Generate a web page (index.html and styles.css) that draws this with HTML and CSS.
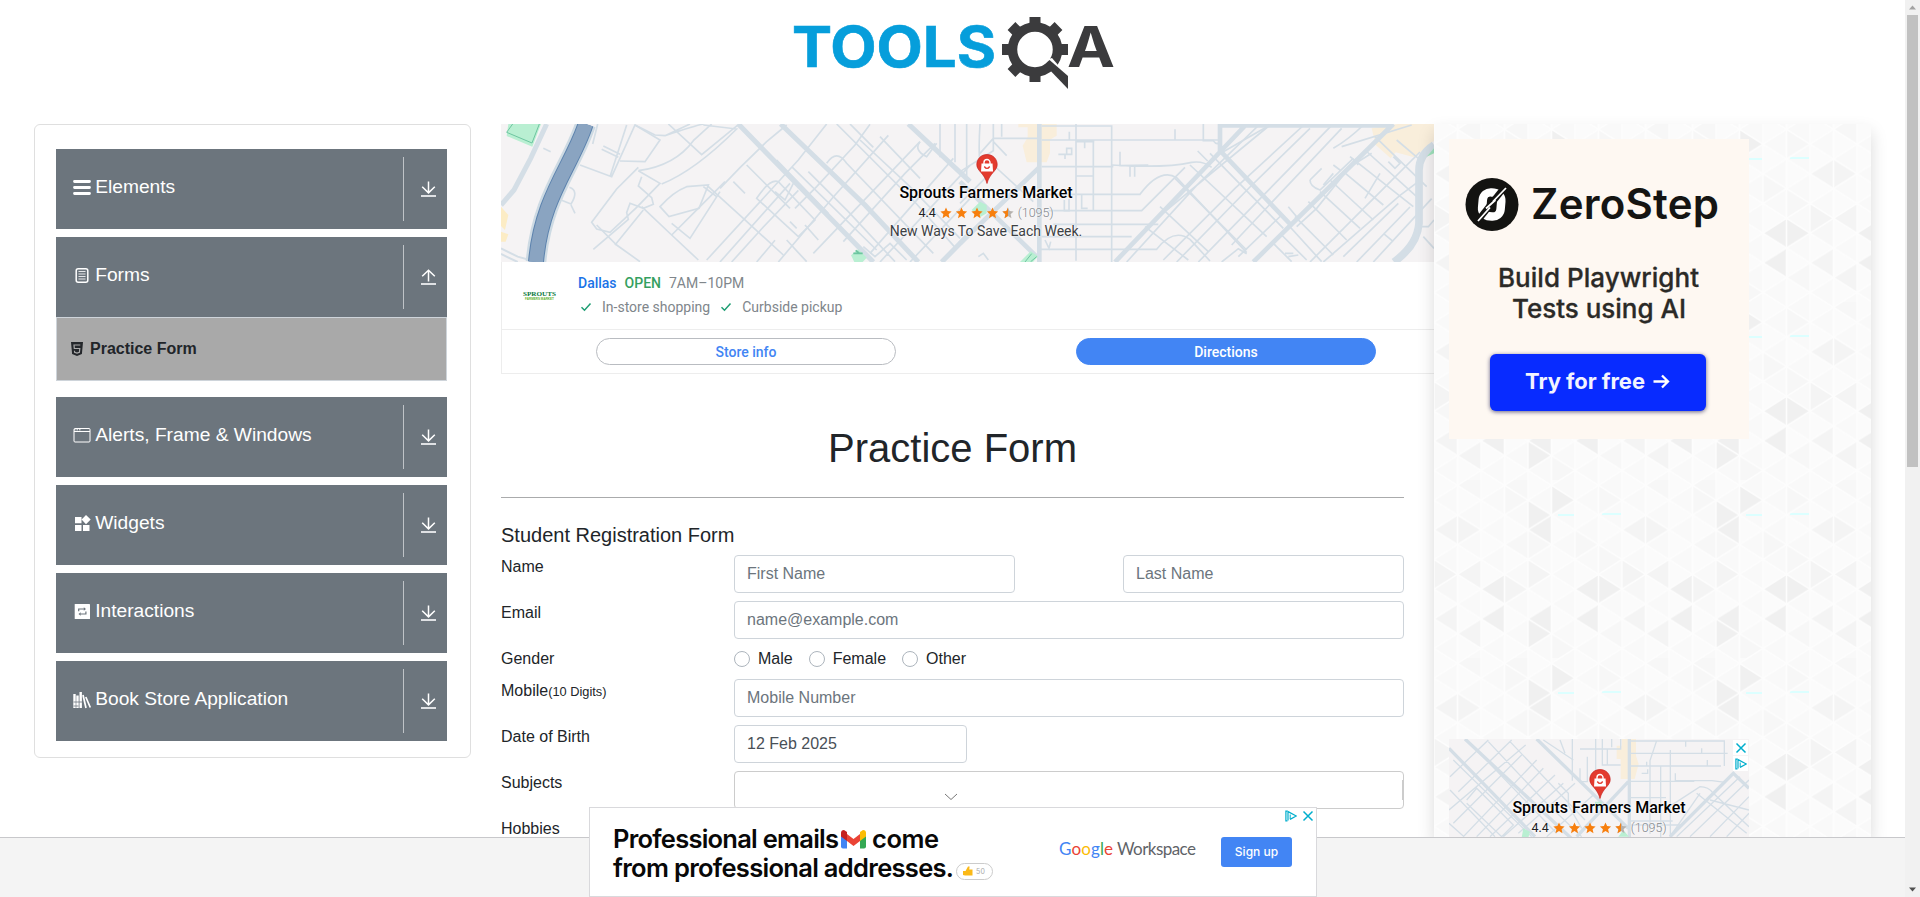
FILE: index.html
```html
<!DOCTYPE html>
<html lang="en">
<head>
<meta charset="utf-8">
<title>ToolsQA</title>
<link rel="stylesheet" href="styles.css">
</head>
<body>
<svg class="defs" width="0" height="0" aria-hidden="true">
  <defs>
    <symbol id="down" viewBox="0 0 16 16"><path d="M8 .5v11M1.7 5.8 8 11.9l6.300-6.100" fill="none" stroke="#fff" stroke-width="1.500"/><path d="M.5 15h15" stroke="#dfe1e4" stroke-width="2"/></symbol>
    <symbol id="up" viewBox="0 0 16 16"><path d="M8 12.500v-11M1.700 7.300 8 1.200l6.300 6.100" fill="none" stroke="#fff" stroke-width="1.500"/><path d="M.5 15h15" stroke="#dfe1e4" stroke-width="2"/></symbol>
    <symbol id="star" viewBox="0 0 12 12"><path d="M6 .4l1.600 3.700 4 .4-3 2.700.9 4L6 9.100l-3.500 2.100.9-4-3-2.700 4-.4z"/></symbol>
    <symbol id="pin" viewBox="0 0 22 30"><path d="M11 .5C5 .5.800 5 .8 10.700.8 17 8.500 19 11 29.500 13.500 19 21.200 17 21.200 10.700 21.200 5 17 .5 11 .5z" fill="#e33b2e" stroke="#c5221f" stroke-width=".7"/><path d="M5.500 9.500h11l.5 8H5z" fill="#fff"/><path d="M8 10V8.500a3 3 0 0 1 6 0V10" fill="none" stroke="#fff" stroke-width="1.400"/><path d="M8.300 12.500q2.700 3.800 5.400 0" fill="none" stroke="#e33b2e" stroke-width="1.300"/></symbol>
    <symbol id="stars" viewBox="0 0 76 12"><g fill="#f77f0e"><use href="#star" width="12" height="12"/><use href="#star" x="15.500" width="12" height="12"/><use href="#star" x="31" width="12" height="12"/><use href="#star" x="46.500" width="12" height="12"/></g><use href="#star" x="62" width="12" height="12" fill="#b5b1ad"/><path d="M68 .4 66.400 4.100l-4 .4 3 2.700-.9 4L68 9.100z" fill="#f77f0e"/></symbol>
    <symbol id="adchoice" viewBox="0 0 12 12"><path d="M2.500 10.800H.9V1.200h1.600" fill="none" stroke="#00aecd" stroke-width="1.200"/><path d="M3 10.600V1.600L11.300 6 5 9.400" fill="none" stroke="#00aecd" stroke-width="1.200"/><path d="M5.200 4.500v4.700" stroke="#00aecd"/></symbol>
    <symbol id="close" viewBox="0 0 12 12"><path d="M1.500 1.500l9 9M10.500 1.500l-9 9" stroke="#00aecd" stroke-width="1.500"/></symbol>
  </defs>
</svg>

<div class="window">
  <div class="page">
    <header class="header">
      <svg class="logo" viewBox="0 0 350 110" role="img" aria-label="ToolsQA">
        <text class="logo-tools" x="12" y="67" textLength="204" lengthAdjust="spacingAndGlyphs">TOOLS</text>
        <g fill="none" stroke="#3b3b3d">
          <circle cx="255" cy="49.500" r="22.500" stroke-width="9.500"/>
          <path d="M255 17v8M255 74v8M222 49.500h8M280 49.500h8M231.500 26l6 6M278.500 26l-6 6M231.500 73l6-6" stroke-width="11"/>
        </g>
        <path d="M262 61l10-3 12 14v9z" fill="#fff"/>
        <path d="M264.500 64.500l5-4.500 18.500 16v13z" fill="#3b3b3d"/>
        <text class="logo-a" x="287" y="67" textLength="48" lengthAdjust="spacingAndGlyphs">A</text>
      </svg>
    </header>

    <div class="columns">
      <nav class="sidebar">
        <div class="group">
          <svg class="icon" viewBox="0 0 18 18"><path d="M1.500 2.500h15M1.500 8.500h15M1.500 14.500h15" stroke="#fff" stroke-width="2.800" stroke-linecap="round"/></svg>
          <span class="label">Elements</span><svg class="toggle"><use href="#down"/></svg>
        </div>
        <div class="group open">
          <svg class="icon" viewBox="0 0 18 18"><rect x="3.200" y="1.700" width="11.600" height="13.600" rx="2" fill="none" stroke="#fff" stroke-width="1.500"/><path d="M5.500 4.500h7M5.500 7h7M5.500 9.500h7M5.500 12h7" stroke="#e4e6e8" stroke-width="1.200"/></svg>
          <span class="label">Forms</span><svg class="toggle"><use href="#up"/></svg>
        </div>
        <div class="subitem">
          <svg class="html5" viewBox="0 0 12 14"><path d="M0 0h12l-1.100 12L6 14l-4.900-2z" fill="#24272b"/><path d="M9.300 3H3l.3 3.500h5.500l-.4 3.800L6 11l-2.400-.7-.1-1.500" fill="none" stroke="#aaa" stroke-width="1.200"/></svg>
          <span>Practice Form</span>
        </div>
        <div class="group">
          <svg class="icon" viewBox="0 0 18 18"><rect x="1" y="1.500" width="16" height="13.500" rx="1" fill="none" stroke="#fff"/><path d="M1 4.500h16" stroke="#fff"/><path d="M1 2.800h7" stroke="#fff" stroke-dasharray="1.500 1"/></svg>
          <span class="label">Alerts, Frame &amp; Windows</span><svg class="toggle"><use href="#down"/></svg>
        </div>
        <div class="group">
          <svg class="icon" viewBox="0 0 18 18"><path d="M2 2h6.500v6.200H2zM2 10h6.500v6H2zM10 10h6.500v6H10zM13 0l4.700 4.600L13 9.200 8.600 4.600z" fill="#fff"/></svg>
          <span class="label">Widgets</span><svg class="toggle"><use href="#down"/></svg>
        </div>
        <div class="group">
          <svg class="icon" viewBox="0 0 18 18"><rect x="1.700" y="1" width="15.300" height="15" rx=".6" fill="#fff"/><path d="M5.700 8.200V6h5.500M12.900 8.500V11H7.500" fill="none" stroke="#6c757d" stroke-width="1.200"/><path d="M10.800 4.200 13 6l-2.200 1.800zM7.700 9.200 5.500 11l2.200 1.800z" fill="#6c757d"/></svg>
          <span class="label">Interactions</span><svg class="toggle"><use href="#down"/></svg>
        </div>
        <div class="group">
          <svg class="icon" viewBox="0 0 18 18"><path d="M1.500 3v14M4.500 4.500V17M7.700 1v16" stroke="#fff" stroke-width="2.400"/><path d="M.5 11h9M.5 15h5" stroke="#6c757d" stroke-width=".8"/><path d="M10 4l3 13M12.800 6l4.500 10.500" stroke="#fff" stroke-width="1.700"/></svg>
          <span class="label">Book Store Application</span><svg class="toggle"><use href="#down"/></svg>
        </div>
      </nav>

      <main class="main">
        <section class="place-ad">
          <div class="map">
            <svg class="map-art" viewBox="0 0 970 138">
              <g transform="translate(-11 -14) scale(.33333)" fill="none" stroke="#d4dee6" stroke-width="5">
                <path d="M55 42h98l-26 68-77-32z" fill="#b9efd2" stroke="none"/><path d="M68 42l-18 25 76 32 22-57" stroke="#6cc5a0" stroke-width="3"/>
                <path d="M33 290l22 25-10 45-12-12zM33 365l22 8-8 22H33z" fill="#fcecc5" stroke="none"/>
                <path d="M170 42 122 145 72 240 33 285" stroke-width="15"/>
                <path d="M33 415l50 25 50 14M33 432l50 24" stroke-width="6"/>
                <path d="M287 42C245 170 155 260 138 456" stroke="#cddae3" stroke-width="62"/>
                <path d="M287 42C245 170 155 260 138 456" stroke="#5d83ae" stroke-width="48"/>
                <path d="M287 42C245 170 155 260 138 456" stroke="#8aa4c1" stroke-width="42"/>
                <path d="M745 42 845 145 1150 456M872 42 1125 285 1285 456M1255 42 1440 215M1440 370 1355 456" stroke-width="15"/>
                <path d="M270 165l95 35 70-155 75 45-45 65-75-2M340 108l50 25M335 118l50 24M160 115l22 10M410 45l-50 155M238 232q30 10 5 50l-30-12M243 285l12 25M323 42l-15 60"/>
                <path d="M435 45l60 30 30 2 75-35M525 77q90-30 115-35M445 182q110-15 165-90l55-50M515 222q100-40 225-165l-100-12M445 182l65 38-70 72-80 75-40-10-15-20 75-100 65-65M535 42l100 92 110-90"/>
                <path d="M455 200l-10 28 40 35 5 20-30 12-40-15-10 28 5 20-105 90M455 290l90 85 80 75M510 290q40-45 80-60l65-5-28 70-90 25zM690 235l60-62L830 95l60-50M655 230l105 95 120 110M690 245l-90 140-55-45M320 345l60 60 70 50"/>
                <path d="M375 405l85-105M650 450 925 150 1010 42M690 456 900 220M725 456l95-105 105-110M545 375l100-100 60-60M640 230l40 30M730 215l35 35M770 165l130 130M860 150l155 160M905 170l255 250M910 220l-25 50-30-25M915 295l65-65 115-125 45-62M800 456l55-65M865 456l165-195 165-185M970 430 1290 95"/>
                <path d="M955 185l120 120 140 150M1010 160q30-45 60 0l260 270M1040 42l240 240 115 130M1110 90l150 140 150 155M1170 80l120 125M1060 395l185-205 90-90M800 265q40-60 65-50l110 115-50 50zM1140 430l250-285M1170 456l270-290M1260 456l180-190"/>
                <path d="M1080 42l70 70M1350 42v100M1395 42v115M900 335l20 20M945 345l40 45M890 390l60 65M1120 410l35 30 45-40 50 50M1290 95q-20 25 20 45l30-40"/>
                <path d="M1105 418l25 25-12 13h-25l-10-20z" fill="#b9efd2" stroke="none"/><path d="M1090 430h28M1097 421l10 8" stroke="#6cc5a0"/>
              </g>
              <g transform="translate(459 -14) scale(.33333)" fill="none" stroke="#d4dee6" stroke-width="5">
                <path d="M175 42h115v35l-20 12v40l-10 28h-60l-12-50 15-25V52h-28zM1235 55l80-13h107v50l-60 50-55-15-15 18-45-40z" fill="#f9eedb" stroke="none"/>
                <path d="M238 42v414M0 400 240 170M0 215 230 440M780 42v80l210 220M860 42 700 210 465 456M1300 42 880 456M780 46h520" stroke-width="14"/>
                <path d="M1422 105q-45 30-45 75v160q-5 65-75 116" stroke-width="23"/>
                <path d="M20 42v160M60 42q-5 80 0 120M100 42v80L0 185M125 42v38M100 85h135M100 85L60 130M100 95l40 42M100 165l120 110M0 280l90-90M245 48h210v408M245 90h535M245 170h215M265 302h280l130-130M245 253h295q60-80 110-50l210 225M280 343h315M245 380h270M240 418h350q50-65 100-30l60 65M348 42v410M400 90v210M348 95h55M348 198h50"/>
                <path d="M328 65v25M374 90v25M295 133h40v-18h-15v18M315 135v12M365 255v40h18M313 270v32h14v-35M480 125v42l85-2M645 58v32M730 42v50h30q15 20 20-5M510 168v32M524 168v32M455 165q160 10 240-8 35-5 60 15M713 123l30 30M255 390l12 25 5-20M55 440l15-10 15 20"/>
                <path d="M590 325l340-280M555 350l130 100M600 290l145 135M610 450l215-215L1035 42M650 456l220-225L1050 55M715 456l400-410M645 205l215 215M690 165l230 215M750 130l220 225M500 456l210-230L900 42"/>
                <path d="M790 125l140-80M815 405l160-170L1145 55M785 456l50-40 25 15M835 440l130-125M1050 210l35-35M1050 210q0 20 30 30l100-95M1090 225l30-35M1120 165l20 15M1180 150l15 15M1145 110l210-65"/>
                <path d="M940 400l55 55M965 375l75 75M985 345l100 110M1005 320l115 115M1045 275l115 115M1080 245l120 110M1110 210l130 120M1150 185l120 100M1170 140l190 150M1215 120l155 140M1245 80l155 150M1010 350l60-55 100-125 65-40M1050 456l230-230 100-100M1090 456l230-200 60-45M1150 440l165-160M1190 456l160-165M1240 456l175-190M1270 370l30 25M1215 265l45-75M1310 90l65 55M1300 140l20 20-15 15-20-20M1385 350h20l17-20M1390 380l32 35M1220 120l70-75M1120 115q50-30 90-70M985 290l25 30M975 430h25M985 440l30-5"/>
                <path d="M180 456l32-32 22 15-15 17zM35 300l25-25 20 10v25l-20 12z" fill="#b9efd2" stroke="none"/><path d="M195 456l20-25M212 455l18-15" stroke="#6cc5a0" stroke-width="3"/><path d="M1400 140l22-25v15z" fill="#9fe3bd" stroke="none"/>
              </g>
            </svg>
            <div class="map-label">
              <svg class="pin"><use href="#pin"/></svg>
              <strong class="place">Sprouts Farmers Market</strong>
              <div class="rating"><b>4.4</b><svg class="stars"><use href="#stars"/></svg><span>(1095)</span></div>
              <div class="tagline">New Ways To Save Each Week.</div>
            </div>
          </div>
          <div class="store">
            <svg class="store-logo" viewBox="0 0 36 16"><text class="sl1" x="1" y="9" textLength="33" lengthAdjust="spacingAndGlyphs">SPROUTS</text><text class="sl2" x="3" y="13" textLength="29" lengthAdjust="spacingAndGlyphs">FARMERS MARKET</text></svg>
            <div class="store-info">
              <div class="store-line"><b class="city">Dallas</b><b class="openlabel">OPEN</b><span>7AM–10PM</span></div>
              <div class="store-line"><svg class="check" viewBox="0 0 12 10"><path d="M1.500 5.200l3 3L10.500 1.500" fill="none" stroke="#1e9e73" stroke-width="1.500"/></svg><span class="feature">In-store shopping</span><svg class="check" viewBox="0 0 12 10"><path d="M1.500 5.200l3 3L10.500 1.500" fill="none" stroke="#1e9e73" stroke-width="1.500"/></svg><span>Curbside pickup</span></div>
            </div>
          </div>
          <div class="store-actions"><span class="pill">Store info</span><span class="pill solid">Directions</span></div>
        </section>

        <h1 class="title">Practice Form</h1>
        <form class="form">
          <h5 class="form-title">Student Registration Form</h5>
          <div class="row"><label>Name</label><div class="names"><input class="field" placeholder="First Name"><input class="field" placeholder="Last Name"></div></div>
          <div class="row"><label>Email</label><input class="field" placeholder="name@example.com"></div>
          <div class="row"><label>Gender</label><div class="radios"><span class="radio">Male</span><span class="radio">Female</span><span class="radio">Other</span></div></div>
          <div class="row"><label>Mobile<small>(10 Digits)</small></label><input class="field" placeholder="Mobile Number"></div>
          <div class="row"><label>Date of Birth</label><input class="field date" value="12 Feb 2025"></div>
          <div class="row"><label>Subjects</label><div class="field subjects"><i class="caret"></i></div></div>
          <div class="row"><label>Hobbies</label></div>
        </form>
      </main>

      <aside class="right">
        <svg class="texture" width="437" height="720">
          <defs>
            <pattern id="grid" width="47" height="29.667" patternUnits="userSpaceOnUse">
              <rect width="47" height="30" fill="#fbfbfb"/>
              <path d="M23.500 5.300v29.700L0 20.200zM23.500-24.300v29.600L0-9.500zM47-9.500v29.700L23.500 5.300zM47 20.200v29.700L23.500 35z" fill="#f9f9f9"/>
            </pattern>
            <pattern id="lines" width="47" height="29.667" patternUnits="userSpaceOnUse">
              <path d="M0 0v30M23.500 0v30M47 0v30M0-9.500 23.500 5.300 47-9.500M0 20.200 23.500 5.300 47 20.200M0 20.200 23.500 35 47 20.200" fill="none" stroke="#fdfdfd" stroke-width="1.500"/>
            </pattern>
            <pattern id="shades" width="188" height="178" patternUnits="userSpaceOnUse">
              <g fill="#f0f0f0">
                <path d="M117.500 153.700l-23.500-14.800v29.600zM141 20.200l-23.500-14.800v29.600zM117.500 35l-23.500-14.800v29.600zM94 50l23.500-14.800v29.600zM47 109l23.500-14.800v29.600zM141 109l23.500-14.800v29.600zM188 109l-23.500-14.800v29.600zM47 138.500l23.500-14.800v29.600zM94 138.500l23.500-14.800v29.600zM141 138.500l23.500-14.800v29.600z"/>
              </g>
              <g fill="#f4f4f4">
                <path d="M23.500 153.700l23.500-14.800v29.600zM0 50l23.500-14.800v29.600zM47 50l-23.500-14.800v29.600zM23.500 94.300l-23.500-14.800v29.600zM23.500 94.300l23.500-14.800v29.600zM117.500 94.300l-23.500-14.800v29.600zM94 109l-23.500-14.800v29.600zM0 139l23.500-14.800v29.600z"/>
              </g>
              <g fill="#f7f7f7">
                <path d="M23.500 5.300l23.500-14.800v29.600zM70.500 5.300l23.500-14.800v29.600zM94 20.200l-23.500-14.800v29.600zM164.500 64.700l-23.500-14.800v29.600zM70.500 64.700l23.500-14.800v29.600zM117.500 64.700l-23.500-14.800v29.600zM188 20.200l-23.500-14.800v29.600zM188 79.500l-23.500-14.800v29.600zM0 109l23.500-14.800v29.600zM164.500 154l23.500-14.800v29.600zM141 168l-23.500-14.800v29.600z"/>
              </g>
              <path d="M124 35h16M168 34h19" stroke="#dcffff" stroke-width="2"/>
            </pattern>
          </defs>
          <rect width="437" height="720" fill="url(#grid)"/><rect width="437" height="720" fill="url(#shades)"/><rect width="437" height="720" fill="url(#lines)"/>
        </svg>
        <div class="right-ads">
          <svg class="zerostep" viewBox="0 0 300 300">
            <rect width="300" height="300" fill="#fef8f2"/>
            <circle cx="43" cy="65.500" r="26.500" fill="#131311"/>
            <rect x="33.500" y="53.500" width="18.500" height="24" rx="8" fill="none" stroke="#fff" stroke-width="8.500" transform="rotate(5 43 65)"/>
            <path d="M27 84 58 45" stroke="#131311" stroke-width="6.500"/>
            <path d="M29 82 41 68.500M44 62.500 57 49M37 69.500l9.500-8.500" stroke="#fff" stroke-width="1.800"/>
            <text class="z1" x="82" y="80" textLength="188">ZeroStep</text>
            <text class="z2" x="49" y="147.500" textLength="201">Build Playwright</text>
            <text class="z2" x="63" y="178.500" textLength="174">Tests using AI</text>
            <rect class="z-btn" x="41" y="215" width="216" height="57" rx="6"/>
            <text class="z3" x="76" y="250" textLength="120">Try for free</text>
            <path d="M204.500 242.500h14.500M213 236.500l6 6-6 6" fill="none" stroke="#fff" stroke-width="2.300"/>
          </svg>
          <div class="small-map">
            <svg class="map-art" viewBox="0 0 300 140">
              <g transform="translate(-29 -299) scale(.33333)" fill="none" stroke="#d4dee6" stroke-width="4">
                <path d="M605 897h43v50l8 25-12 45h-42v-60h-12v-40h15z" fill="#f9eedb" stroke="none"/>
                <path d="M628 897v320M135 897 470 1210M87 925 345 1190M350 897 625 1165M470 1190 625 1025M987 1045 940 1000 750 1190" stroke-width="10"/>
                <path d="M457 897v125M502 950v75h-22v-40M527 897v120M547 897v78h55M480 927h75M562 927v48M575 897v25M602 897v30h-55M710 902l-20 60v220M633 903h280v75M633 940h290M633 978h270M633 1024h190M722 978v220M751 930v260M633 1073h105M633 1143h125M797 905v15M845 925v15M862 960v18M766 1000v22l110 0 40 5M680 965v15M665 1000h18v-12M633 1155h150"/>
                <path d="M740 1105l100-65q25 0 40 20l107 100M987 1020 810 1190M960 1010 770 1190M987 1070 870 1190M987 1120 920 1190M830 1060l150 120M870 1080l117 30M750 1190l90-130"/>
                <path d="M90 1010l115-110M115 1055 275 900M87 1110l230-195M100 1150l205-205M130 1190 350 960M170 1190l200-205M210 1190l195-185M250 1190l180-160M270 905l225 235M205 905l165 175 115 110M170 930l240 250M90 1050l135 140M87 1150l45 40M100 960l235 230M140 1080l30-35 110 110-35 35-105-100M295 1180l170-150M380 1190l140-125M370 900l90 60M420 900l15 40M415 1030l30 30v35l40 70"/>
                <path d="M310 1165l20 10-5 18h-20zM595 1190l15-20 17 20zM525 1085h20v20h-20z" fill="#b9efd2" stroke="none"/>
              </g>
            </svg>
            <div class="map-label">
              <svg class="pin"><use href="#pin"/></svg>
              <strong class="place">Sprouts Farmers Market</strong>
              <div class="rating"><b>4.4</b><svg class="stars"><use href="#stars"/></svg><span>(1095)</span></div>
            </div>
            <div class="ad-badges"><span><svg><use href="#close"/></svg></span><span><svg><use href="#adchoice"/></svg></span></div>
          </div>
        </div>
      </aside>
    </div>

    <footer class="footer"></footer>

    <svg class="collapse" viewBox="0 0 14 8"><path d="M1 1l6 5.500L13 1" fill="none" stroke="#777"/></svg>
    <div class="anchor-ad">
      <svg class="anchor-copy" viewBox="0 0 440 88">
        <text class="pro" x="23" y="40" textLength="226">Professional emails</text>
        <g transform="translate(251 22)"><path d="M0 4v12.500q0 2 2 2h4V7z" fill="#4285f4"/><path d="M25 4v12.500q0 2-2 2h-4V7z" fill="#34a853"/><path d="M6 4l6.500 5L19 4v7l-6.500 5L6 11z" fill="#ea4335"/><path d="M0 5V3q0-3 3-3l3 2v9L0 6.500z" fill="#c5221f"/><path d="M25 5V3q0-3-3-3l-3 2v9l6-4.500z" fill="#fbbc04"/></g>
        <text class="pro" x="282" y="40" textLength="67">come</text>
        <text class="pro" x="23" y="69" textLength="341">from professional addresses.</text>
        <rect x="366.500" y="55.500" width="36" height="16" rx="8" fill="#fff" stroke="#ccc"/>
        <path d="M373 63h2.500l2.500-4.500h1.600l-.3 3h3.200v6H375l-2-.5z" fill="#fbb917"/>
        <text class="votes" x="386" y="66" textLength="9">50</text>
      </svg>
      <svg class="workspace" viewBox="0 0 140 30"><text class="gw" y="21" x="0" textLength="54"><tspan fill="#4285f4">G</tspan><tspan fill="#ea4335">o</tspan><tspan fill="#fbbc04">o</tspan><tspan fill="#4285f4">g</tspan><tspan fill="#34a853">l</tspan><tspan fill="#ea4335">e</tspan></text><text class="gw" y="21" x="58" textLength="79" fill="#5f6368">Workspace</text></svg>
      <span class="signup">Sign up</span>
      <div class="anchor-badges"><svg><use href="#adchoice"/></svg><svg><use href="#close"/></svg></div>
    </div>
  </div>

  <div class="scrollbar">
    <svg viewBox="0 0 15 15"><path d="M4 9.500l3.500-4 3.500 4z" fill="#a3a3a3"/></svg>
    <div class="thumb"></div>
    <svg viewBox="0 0 15 15"><path d="M4 5.500h7l-3.500 4z" fill="#505050"/></svg>
  </div>
</div>
</body>
</html>
```
FILE: styles.css
```css
*, *::before { box-sizing: border-box; }
body { margin: 0; background: #fff; color: #212529; font: 16px/24px "Liberation Sans", Arial, sans-serif; }
svg { display: block; flex: none; }
.defs { position: absolute; }
.window { display: flex; width: 1920px; height: 897px; overflow: hidden; }
.page { position: relative; display: flex; flex-direction: column; width: 1905px; height: 897px; }
.header { flex: none; height: 124px; padding-left: 780px; }
.logo { width: 350px; height: 110px; }
.logo-tools, .logo-a { font: 700 56px Inter, sans-serif; }
.logo-tools { fill: #069edb; stroke: #069edb; stroke-width: .6px; }
.logo-a { fill: #3b3b3d; }

.columns { flex: none; display: flex; align-items: flex-start; height: 713px; padding-left: 34px; clip-path: inset(-30px 0 0 0); }

.sidebar { width: 437px; height: 634px; margin-right: 30px; padding: 24px 23px 0 21px; border: 1px solid #dfdfdf; border-radius: 6px; }
.group { display: flex; height: 80px; margin-bottom: 8px; padding: 8px 7px 8px 16.500px; background: #6c757d; color: #fff; }
.group.open { margin-bottom: 0; }
.icon { width: 18px; height: 18px; margin: 22px 4.700px 0 0; }
.label { flex: 1; padding-top: 16px; font-size: 19.200px; line-height: 27px; }
.toggle { width: 37px; height: 64px; padding: 24px 0 24px 13px; border-left: 1px solid #bfc3c7; }
.toggle use { width: 15px; height: 16px; }
.subitem { display: flex; align-items: center; gap: 7px; height: 64px; margin-bottom: 16px; padding-left: 14px; border: 1px solid #ced4da; background: #a9a9a9; font-weight: 700; }
.subitem span { padding-bottom: 1px; }
.html5 { width: 12px; height: 14px; }

.main { width: 903px; height: 713px; margin-right: 30px; }
.place-ad { width: 970px; height: 250px; border: 1px solid #ededed; border-top: 0; font-family: Roboto, sans-serif; background: #fff; }
.map, .small-map { position: relative; background: #f5f3f4; overflow: hidden; }
.map { width: 970px; height: 138px; margin-left: -1px; }
.map-art { width: 970px; height: 138px; }
.map-label { position: absolute; inset: 30px 0 0; display: flex; flex-direction: column; align-items: center; color: #000; text-shadow: 0 0 2px #fff, 0 0 2px #fff; font-family: Roboto, sans-serif; white-space: nowrap; }
.pin { width: 22px; height: 30px; margin-left: 1px; }
.place { font-weight: 500; font-size: 16px; line-height: 20px; margin-top: -1px; }
.rating { display: flex; align-items: center; font-size: 13px; line-height: 18px; margin-top: 1px; color: #202124; }
.rating b { font-weight: 400; font-size: 12.500px; margin-right: 4px; }
.rating span { font-weight: 300; font-size: 12.500px; color: #80868b; margin-left: 2px; }
.stars { width: 76px; height: 12px; }
.tagline { font-size: 14px; line-height: 18px; color: #3c4043; }
.store { display: flex; height: 68px; padding: 9px 0 0 20px; border-bottom: 1px solid #ededed; }
.store-logo { width: 36px; height: 16px; margin: 16px 20px 0 0; }
.sl1 { font: 700 7px "Liberation Serif", serif; fill: #08783b; }
.sl2 { font: 700 4px "Liberation Sans", sans-serif; fill: #66b32e; }
.store-line { display: flex; align-items: center; height: 24px; font-size: 14px; color: #80868b; }
.store-line b { font-weight: 500; }
.city { color: #1a73e8; margin-right: 8px; }
.openlabel { color: #34a05f; margin-right: 8px; }
.check { width: 12px; height: 10px; margin: 0 10px 0 2px; }
.feature { margin-right: 8px; }
.store-actions { display: flex; justify-content: space-around; padding: 8px 4px; }
.pill { width: 300px; height: 27px; border: 1px solid #b9bcc1; border-radius: 14px; color: #4285f4; font-weight: 500; font-size: 14px; line-height: 26px; text-align: center; }
.pill.solid { background: #4285f4; border-color: #4285f4; color: #fff; }

.title { width: 903px; margin: 50px 0 25px; font-weight: 400; font-size: 40px; line-height: 48px; text-align: center; }
.form { border-top: 1px solid #aaabac; padding-top: 25px; }
.form-title { margin: 0; font-weight: 400; font-size: 20px; line-height: 24px; }
.row { display: flex; margin-top: 8px; }
.row label { width: 233px; flex: none; }
.row small { font-size: 12.800px; }
.field { display: block; width: 670px; height: 38px; padding: 6px 12px; border: 1px solid #ced4da; border-radius: 4px; background: #fff; color: #495057; font: 16px/24px "Liberation Sans", Arial, sans-serif; }
.field::placeholder { color: #6c757d; opacity: 1; }
.names { display: flex; justify-content: space-between; width: 670px; }
.names .field { width: 281px; }
.field.date { width: 233px; }
.subjects { display: flex; justify-content: flex-end; padding: 8px 0 0; border-color: #ccc; }
.caret { width: 1px; height: 20px; background: #ccc; }
.radios { display: flex; gap: 16px; }
.radio { display: flex; align-items: center; gap: 8px; }
.radio::before { content: ""; width: 16px; height: 16px; border: 1px solid #adb5bd; border-radius: 50%; }

.right { position: relative; width: 437px; height: 713px; background: #fafafa; box-shadow: 0 8px 16px rgba(0, 0, 0, .15); }
.texture { position: absolute; left: 0; top: 0; height: 713px; }
.right-ads { position: relative; display: flex; flex-direction: column; gap: 300px; height: 713px; padding: 15px 0 0 15px; overflow: hidden; }
.zerostep { width: 300px; height: 300px; }
.z1, .z2, .z3 { font-family: Inter, sans-serif; font-weight: 600; }
.z1 { font-size: 42px; fill: #151513; }
.z2 { font-size: 26px; font-weight: 500; fill: #2b2a27; stroke: #2b2a27; stroke-width: .3px; }
.z3 { font-size: 22px; font-weight: 700; fill: #f2f3ff; }
.z-btn { fill: #082bff; filter: drop-shadow(0 1px 2px rgba(0, 0, 60, .6)); }
.small-map { flex: none; width: 300px; height: 140px; }
.small-map .map-art { width: 300px; height: 140px; }
.ad-badges { position: absolute; top: 1px; right: 1px; display: grid; gap: 1px; }
.ad-badges span { width: 15px; height: 15px; padding: 2px; background: #fff; }
.ad-badges svg { width: 12px; height: 12px; }

.footer { flex: none; height: 60px; border-top: 1px solid #c8c8cb; background: #f4f4f4; position: relative; }
.collapse { position: absolute; left: 944px; top: 793px; width: 14px; height: 8px; }
.anchor-ad { position: absolute; left: 589px; top: 807px; display: flex; width: 728px; height: 90px; border: 1px solid #d9d9dc; background: #fff; }
.anchor-copy { width: 440px; height: 88px; margin-right: 29px; }
.pro { font: 600 25.500px Inter, sans-serif; fill: #080808; }
.votes { font: 7px Inter, sans-serif; fill: #aaa; }
.workspace { width: 140px; height: 30px; margin: 26px 22px 0 0; }
.gw { font: 400 17px Lato, sans-serif; }
.signup { width: 71px; height: 30px; margin-top: 29px; border-radius: 3px; background: #4285f4; color: #fff; font: 500 12px/30px Inter, sans-serif; text-align: center; }
.anchor-badges { position: absolute; top: 2px; right: 2px; display: flex; gap: 5px; }
.anchor-badges svg { width: 12px; height: 12px; }

.scrollbar { display: flex; flex-direction: column; width: 15px; height: 897px; background: #f1f1f1; }
.scrollbar svg { width: 15px; height: 15px; }
.thumb { width: 11px; height: 452px; margin: 0 2px 415px; background: #c1c1c1; }
```
